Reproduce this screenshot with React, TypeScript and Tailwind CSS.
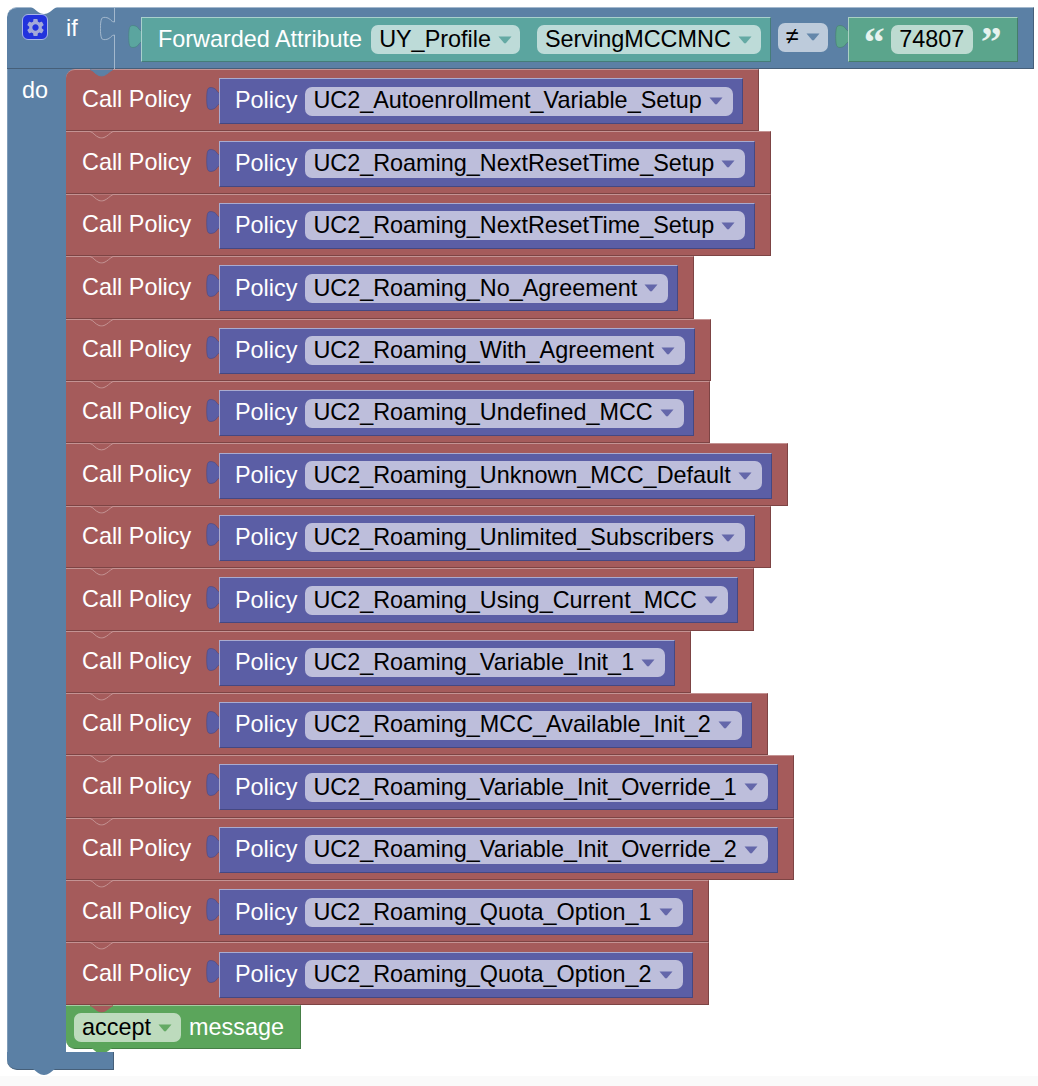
import { MdSettings } from "react-icons/md";

const POLICIES = [
  "UC2_Autoenrollment_Variable_Setup",
  "UC2_Roaming_NextResetTime_Setup",
  "UC2_Roaming_NextResetTime_Setup",
  "UC2_Roaming_No_Agreement",
  "UC2_Roaming_With_Agreement",
  "UC2_Roaming_Undefined_MCC",
  "UC2_Roaming_Unknown_MCC_Default",
  "UC2_Roaming_Unlimited_Subscribers",
  "UC2_Roaming_Using_Current_MCC",
  "UC2_Roaming_Variable_Init_1",
  "UC2_Roaming_MCC_Available_Init_2",
  "UC2_Roaming_Variable_Init_Override_1",
  "UC2_Roaming_Variable_Init_Override_2",
  "UC2_Roaming_Quota_Option_1",
  "UC2_Roaming_Quota_Option_2",
];

const TAB_PATH = "M14 6 C11 6 11 2.5 8 1.2 C5 0 2.5 0.2 1.6 2.5 C0.4 6 0.4 17 1.6 20.5 C2.5 22.8 5 23 8 21.8 C11 20.5 11 17 14 17";
const NOTCH_PATH = "M0 0.5 C3 1 5 5 9 6.5 C10.5 7 12.5 7 14 6.5 C17 5.5 20 2 23 0.5";

// puzzle connector sticking out of the left side of a value block
const Tab = ({ className }: { className: string }) => (
  <svg width="14" height="23" viewBox="0 0 14 23" className={`-mt-[6px] shrink-0 ${className}`}>
    <path d={TAB_PATH} strokeWidth="0.6" />
  </svg>
);

// the v-shaped connector between stacked statement blocks
const Notch = ({ className }: { className: string }) => (
  <svg width="23" height="8" viewBox="0 0 23 8" className={`absolute left-[24px] top-[-1px] ${className}`}>
    <path d={NOTCH_PATH} strokeWidth="1" />
  </svg>
);

const Arrow = ({ className }: { className: string }) => (
  <svg width="14" height="8" viewBox="0 0 14 8" className={`shrink-0 opacity-90 ${className}`}>
    <path d="M0.5 0.5 H13.5 L8 7 Q7 7.8 6 7 Z" />
  </svg>
);

const CallPolicy = ({ name, first }: { name: string; first: boolean }) => (
  <div className={`w-fit ${first ? "bg-[#5b80a5]" : ""}`}>
    <div
      className={`relative flex h-[62.4px] w-fit items-center border-t border-r border-b border-t-[#c49393] border-r-[#7d4444] border-b-[#7d4444] bg-[#a55b5b] pt-[2px] pr-[15px] pl-[16px] ${
        first ? "rounded-tl-[9px]" : ""
      }`}
    >
      {first ? (
        <Notch className="fill-[#5b80a5] stroke-[#5b80a5]" />
      ) : (
        <Notch className="fill-[#a55b5b] stroke-[#c49393]" />
      )}
      <span className="relative -top-[1px] w-[109px] leading-none whitespace-nowrap text-white">Call Policy</span>
      <Tab className="ml-[15px] -mr-px fill-[#5b5ea5] stroke-[#474a84]" />
      <div className="flex h-[46px] items-center border border-t-[#a9abd0] border-r-[#454882] border-b-[#454882] border-l-[#a9abd0] bg-[#5b5ea5] pr-[9px] pl-[15px]">
        <span className="leading-none text-white">Policy</span>
        <div className="ml-[8px] flex h-[29px] items-center gap-[7px] rounded-[7px] bg-[#bdbedb] pr-[10px] pl-[8px] text-black">
          <span className="leading-none whitespace-nowrap">{name}</span>
          <Arrow className="fill-[#5b5ea5]" />
        </div>
      </div>
    </div>
  </div>
);

export default function App() {
  return (
    <div className="relative h-[1086px] w-[1038px] overflow-hidden bg-white pt-[7px] pl-[7px] font-['Liberation_Sans',Arial,sans-serif] text-[23.4px]">
      {/* if header */}
      <div className="relative flex h-[62px] w-[1027px] rounded-tl-[10px] border-t border-r border-b border-t-[#a3b8cd] border-r-[#465f79] border-b-[#465f79] bg-[#5b80a5]">
        <svg width="26" height="8" viewBox="0 0 26 8" className="absolute left-[24px] top-[-1px] fill-white">
          <path d="M0 0 C3 1 6 5 10 6.5 C11.5 7 14.5 7 16 6.5 C20 5 23 1 26 0 Z" />
        </svg>
        <div className="relative flex w-[108px] shrink-0 items-start pt-[6px] pl-[15px]">
          <div className="flex h-[26px] w-[26px] items-center justify-center rounded-[6px] border border-[#a9b5e8] bg-[#2233dd]">
            <MdSettings size={21} className="text-[#a3a9d8]" />
          </div>
          <span className="mt-[3px] ml-[18px] leading-none text-white">if</span>
          {/* empty socket and the line that splits the row */}
          <svg width="15" height="61" viewBox="0 0 15 61" className="absolute top-0 right-0 fill-none">
            <path
              d="M14.5 0 V14 C11 14 11 11 8 10 C5 9 2 9 1.5 11 C0 15 0 26 1.5 30 C2 32 5 32 8 31 C11 30 11 27 14.5 27 V61"
              stroke="#a3b8cd"
              strokeWidth="1"
            />
          </svg>
        </div>
        <div className="flex items-center pt-[2px] pl-[13px]">
          <Tab className="-mr-px fill-[#5ba59f] stroke-[#46807c]" />
          <div className="flex h-[45px] items-center border border-t-[#a9d0cd] border-r-[#457d79] border-b-[#457d79] border-l-[#a9d0cd] bg-[#5ba59f] pt-[1px] pr-[9px] pl-[16px]">
            <span className="leading-none whitespace-nowrap text-white">Forwarded Attribute</span>
            <div className="ml-[9px] flex h-[29px] items-center gap-[7px] rounded-[7px] bg-[#bddbd8] px-[8px] text-black">
              <span className="leading-none">UY_Profile</span>
              <Arrow className="fill-[#5ba59f]" />
            </div>
            <div className="ml-[17px] flex h-[29px] items-center gap-[7px] rounded-[7px] bg-[#bddbd8] pr-[9px] pl-[8px] text-black">
              <span className="leading-none">ServingMCCMNC</span>
              <Arrow className="fill-[#5ba59f]" />
            </div>
          </div>
          <div className="mt-[-4px] ml-[7px] flex h-[29px] w-[50px] items-center gap-[7px] rounded-[7px] bg-[#bdcbdb] pl-[8px] text-black">
            <span className="w-[13px] leading-none">≠</span>
            <Arrow className="fill-[#5b80a5]" />
          </div>
          <Tab className="ml-[7px] -mr-px fill-[#5ba58c] stroke-[#46806c]" />
          <div className="flex h-[45px] items-center border border-t-[#a9d0c3] border-r-[#457d6a] border-b-[#457d6a] border-l-[#a9d0c3] bg-[#5ba58c] pt-[1px] pr-[16px] pl-[15px]">
            <span className="relative top-[2px] w-[20px] font-['Liberation_Serif',serif] text-[42px] leading-none font-bold text-[#e6f2ee]">“</span>
            <div className="ml-[7px] flex h-[29px] w-[82px] items-center justify-center rounded-[7px] bg-[#bddbd1] text-black">
              <span className="leading-none">74807</span>
            </div>
            <span className="relative top-[2px] ml-[8px] w-[20px] font-['Liberation_Serif',serif] text-[42px] leading-none font-bold text-[#e6f2ee]">”</span>
          </div>
        </div>
      </div>

      {/* do body */}
      <div className="flex">
        <div className="w-[59px] shrink-0 border-l border-l-[#7f9cb9] bg-[#5b80a5] pt-[10px] pl-[14px] leading-none text-white">do</div>
        <div className="flex flex-col">
          {POLICIES.map((name, i) => (
            <CallPolicy key={i} name={name} first={i === 0} />
          ))}
          <div className="relative flex h-[44px] w-[235px] items-center rounded-bl-[9px] border-t border-r border-b border-t-[#a3cfa3] border-r-[#467f46] border-b-[#467f46] bg-[#5ba55b] pt-[2px] pl-[8px]">
            <Notch className="fill-[#a55b5b] stroke-[#a55b5b]" />
            <div className="flex h-[29px] w-[107px] items-center gap-[7px] rounded-[7px] bg-[#bddbbd] pl-[8px] text-black">
              <span className="leading-none">accept</span>
              <Arrow className="fill-[#5ba55b]" />
            </div>
            <span className="ml-[8px] leading-none text-white">message</span>
            <svg width="23" height="8" viewBox="0 0 23 8" className="absolute bottom-[-7px] left-[24px] fill-[#5ba55b]">
              <path d={NOTCH_PATH} />
            </svg>
          </div>
          <div className="h-[3px]" />
        </div>
      </div>

      {/* bottom of the c-shape */}
      <div className="relative h-[18px] w-[107px] rounded-bl-[10px] border-r border-b border-r-[#465f79] border-b-[#465f79] bg-[#5b80a5]">
        <svg width="26" height="8" viewBox="0 0 26 8" className="absolute bottom-[-7px] left-[24px] fill-[#5b80a5]">
          <path d="M0 0 C3 1 6 5 10 6.5 C11.5 7 14.5 7 16 6.5 C20 5 23 1 26 0 Z" />
        </svg>
      </div>

      <div className="absolute right-0 bottom-0 left-0 h-[10px] bg-[#fafafa]" />
    </div>
  );
}
